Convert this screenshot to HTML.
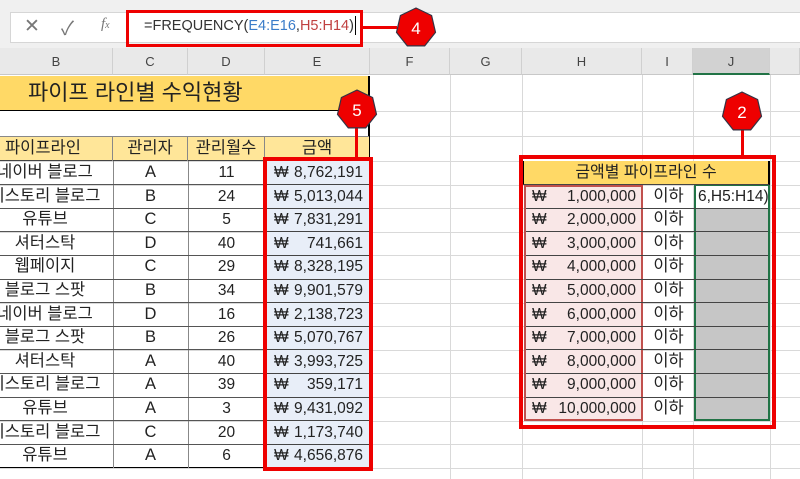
<!DOCTYPE html>
<html><head><meta charset="utf-8">
<style>
*{margin:0;padding:0;box-sizing:border-box}
body{width:800px;height:479px;overflow:hidden;background:#fff;position:relative;font-family:"Liberation Sans","Noto Sans CJK KR",sans-serif;color:#222}
.a{position:absolute}
.vl{position:absolute;top:48px;bottom:0;width:1px;background:#d9d9d9}
.hl{position:absolute;left:0;right:0;height:1px;background:#d9d9d9}
.ch{position:absolute;top:48px;height:27px;background:#e9e9e9;border-right:1px solid #d0d0d0;border-bottom:1px solid #c8c8c8;font-size:13px;color:#444;text-align:center;line-height:27px}
.c{position:absolute;height:23.6px;line-height:23.6px;font-size:16.5px;text-align:center;white-space:nowrap;overflow:hidden}
.n{font-size:15.5px}
.hep{position:absolute;width:42px;height:42px}
</style></head><body>
<div class="a" style="left:0;top:0;width:800px;height:48px;background:#f0f0f0"></div>
<div class="a" style="left:10px;top:12px;width:800px;height:31px;background:#fff;border:1px solid #d6d6d6"></div>
<div class="a" style="left:24px;top:15px;font-size:19px;color:#777">✕</div>
<div class="a" style="left:61px;top:14px;font-size:19px;color:#777">✓</div>
<div class="a" style="left:101px;top:16px;font-size:15px;color:#777;font-style:italic;font-family:'Liberation Serif',serif">f<span style="font-size:10px">x</span></div>
<div class="a" style="left:126px;top:10px;width:237px;height:37px;border:3px solid #e00"></div>
<div class="a" style="left:144px;top:18px;font-size:14.5px;color:#333">=FREQUENCY(<span style="color:#3a7cc9">E4:E16</span>,<span style="color:#c04040">H5:H14</span>)</div>
<div class="a" style="left:355px;top:16px;width:1px;height:19px;background:#000"></div>
<div class="a" style="left:362px;top:26px;width:35px;height:3px;background:#e00"></div>
<div class="ch" style="left:0;width:113px">B</div>
<div class="ch" style="left:113px;width:75px">C</div>
<div class="ch" style="left:188px;width:77px">D</div>
<div class="ch" style="left:265px;width:105px">E</div>
<div class="ch" style="left:370px;width:80px">F</div>
<div class="ch" style="left:450px;width:72px">G</div>
<div class="ch" style="left:522px;width:120px">H</div>
<div class="ch" style="left:642px;width:51px">I</div>
<div class="ch" style="left:693px;width:77px;background:#d2d2d2;border-bottom:2px solid #217346">J</div>
<div class="ch" style="left:770px;width:30px"></div>
<div class="vl" style="left:450px;top:75px"></div><div class="vl" style="left:522px;top:75px"></div><div class="vl" style="left:642px;top:75px"></div><div class="vl" style="left:693px;top:75px"></div><div class="vl" style="left:770px;top:75px"></div>
<div class="hl" style="top:111px"></div><div class="hl" style="top:136px"></div><div class="hl" style="top:161px"></div>
<div class="hl" style="top:184.6px"></div><div class="hl" style="top:208.2px"></div><div class="hl" style="top:231.8px"></div><div class="hl" style="top:255.4px"></div><div class="hl" style="top:279px"></div><div class="hl" style="top:302.6px"></div><div class="hl" style="top:326.2px"></div><div class="hl" style="top:349.8px"></div><div class="hl" style="top:373.4px"></div><div class="hl" style="top:397px"></div><div class="hl" style="top:420.6px"></div><div class="hl" style="top:444.2px"></div><div class="hl" style="top:468px"></div>
<div class="a" style="left:0;top:76px;width:370px;height:35px;background:#ffd966;border-right:2px solid #000;border-bottom:1px solid #000;font-size:22px;line-height:34px;padding-left:28px">파이프 라인별 수익현황</div>
<div class="a" style="left:0;top:111px;width:370px;height:25px;background:#fff;border-right:2px solid #000"></div>
<div class="a" style="left:0;top:136px;width:370px;height:332px;border-right:2px solid #000;border-bottom:1px solid #000"></div>
<div class="a" style="left:0;top:136px;width:369px;height:25px;background:#ffe699;border-top:1px solid #888;border-bottom:1px solid #444"></div>
<div class="c" style="left:0;top:137px;width:113px;height:24px;border-right:1px solid #888;text-align:left;padding-left:5px">파이프라인</div>
<div class="c" style="left:113px;top:137px;width:75px;height:24px;border-right:1px solid #888">관리자</div>
<div class="c" style="left:188px;top:137px;width:77px;height:24px;border-right:1px solid #888">관리월수</div>
<div class="c" style="left:265px;top:137px;width:104px;height:24px">금액</div>
<div class="a" style="left:113px;top:161px;width:1px;height:307px;background:#888"></div>
<div class="a" style="left:188px;top:161px;width:1px;height:307px;background:#888"></div>
<div class="a" style="left:265px;top:161px;width:1px;height:307px;background:#888"></div>
<div class="a" style="left:266px;top:161px;width:103px;height:307px;background:#e8eef8"></div>
<div id="L"></div>
<div class="a" style="left:263px;top:157px;width:110px;height:314px;border:4px solid #e00"></div>
<div class="a" style="left:355px;top:125px;width:3px;height:33px;background:#e00"></div>
<div class="a" style="left:522px;top:161px;width:248px;height:23.6px;background:#ffd966;border-left:2px solid #000;border-right:2px solid #000;border-bottom:1px solid #444;font-size:16px;text-align:center;line-height:23px">금액별 파이프라인 수</div>
<div class="a" style="left:524px;top:184.6px;width:119px;height:236px;background:#f9e7e7;border:2px solid #c0504d"></div>
<div class="a" style="left:694px;top:184.6px;width:76px;height:236px;background:#c6c6c6;border:2px solid #217346"></div>
<div class="a" style="left:696px;top:186px;width:72px;height:22px;background:#fff"></div>
<div id="R"></div>
<div class="a" style="left:519px;top:155px;width:257px;height:274px;border:4px solid #e00"></div>
<div class="a" style="left:741px;top:128px;width:3px;height:29px;background:#e00"></div>
<svg class="hep" style="left:395px;top:7px" viewBox="0 0 42 42"><polygon points="21,1 36.6,8.5 40.5,25.4 29.7,38.9 12.3,38.9 1.5,25.4 5.4,8.5" fill="#e00" stroke="#334" stroke-width="1.2"/><text x="21" y="27" text-anchor="middle" font-size="17" fill="#fff" font-family="Liberation Sans">4</text></svg>
<svg class="hep" style="left:336px;top:89px" viewBox="0 0 42 42"><polygon points="21,1 36.6,8.5 40.5,25.4 29.7,38.9 12.3,38.9 1.5,25.4 5.4,8.5" fill="#e00" stroke="#334" stroke-width="1.2"/><text x="21" y="27" text-anchor="middle" font-size="17" fill="#fff" font-family="Liberation Sans">5</text></svg>
<svg class="hep" style="left:721px;top:91px" viewBox="0 0 42 42"><polygon points="21,1 36.6,8.5 40.5,25.4 29.7,38.9 12.3,38.9 1.5,25.4 5.4,8.5" fill="#e00" stroke="#334" stroke-width="1.2"/><text x="21" y="27" text-anchor="middle" font-size="17" fill="#fff" font-family="Liberation Sans">2</text></svg>
<script>
var d=[["네이버 블로그","A",11,"8,762,191"],["티스토리 블로그","B",24,"5,013,044"],["유튜브","C",5,"7,831,291"],["셔터스탁","D",40,"741,661"],["웹페이지","C",29,"8,328,195"],["블로그 스팟","B",34,"9,901,579"],["네이버 블로그","D",16,"2,138,723"],["블로그 스팟","B",26,"5,070,767"],["셔터스탁","A",40,"3,993,725"],["티스토리 블로그","A",39,"359,171"],["유튜브","A",3,"9,431,092"],["티스토리 블로그","C",20,"1,173,740"],["유튜브","A",6,"4,656,876"]];
var h="";
d.forEach(function(r,i){var t=161+i*23.6;
h+='<div class="c" style="left:-40px;top:'+t+'px;width:170px">'+r[0]+'</div>';
h+='<div class="c" style="left:113px;top:'+t+'px;width:75px">'+r[1]+'</div>';
h+='<div class="c n" style="left:188px;top:'+t+'px;width:77px">'+r[2]+'</div>';
h+='<div class="c n" style="left:274px;top:'+t+'px;width:16px;text-align:left">₩</div>';
h+='<div class="c n" style="left:288px;top:'+t+'px;width:75px;text-align:right">'+r[3]+'</div>';
if(i<12)h+='<div class="a" style="left:266px;top:'+(t+23.2)+'px;width:103px;height:1px;background:#444"></div><div class="a" style="left:0;top:'+(t+23.2)+'px;width:265px;height:1px;background:#555"></div>';});
document.getElementById("L").outerHTML=h;
h="";
for(var i=0;i<10;i++){var t=184.6+i*23.6;
h+='<div class="c n" style="left:532px;top:'+t+'px;width:16px;text-align:left">₩</div>';
h+='<div class="c n" style="left:545px;top:'+t+'px;width:91px;text-align:right">'+(i+1).toLocaleString("en-US")+',000,000</div>';
h+='<div class="c" style="left:643px;top:'+t+'px;width:51px">이하</div>';
if(i<9)h+='<div class="a" style="left:526px;top:'+(t+23.2)+'px;width:242px;height:1px;background:#444"></div>';}
h+='<div class="c n" style="left:696px;top:184.6px;width:72px;text-align:left;padding-left:2px">6,H5:H14)</div>';
document.getElementById("R").outerHTML=h;
</script>
</body></html>
